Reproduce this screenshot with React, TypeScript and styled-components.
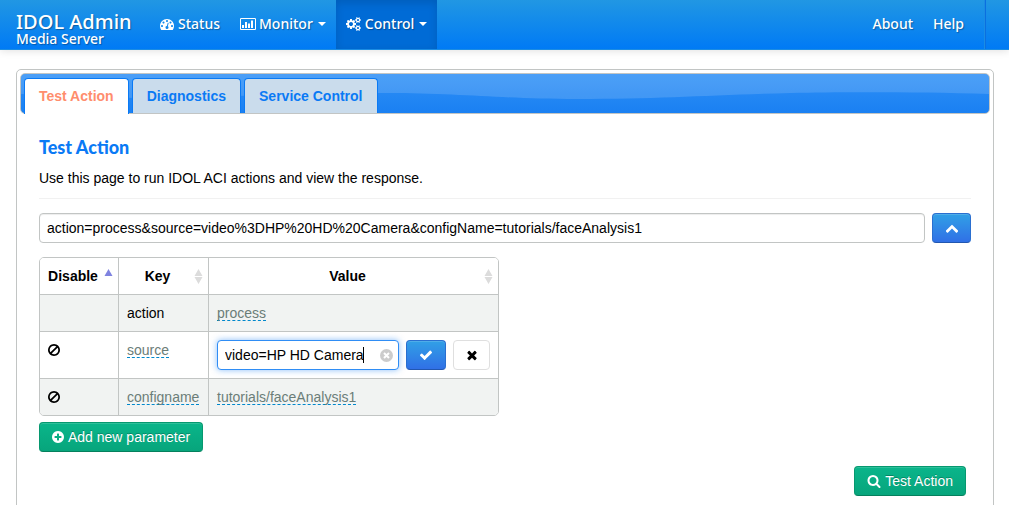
import React, { useState } from "react";
import styled, { createGlobalStyle, css } from "styled-components";

const Global = createGlobalStyle`
  *, *::before, *::after { box-sizing: border-box; }
  html { scrollbar-width: none; }
  body {
    margin: 0;
    background: #fff;
    color: #000;
    font: 14px/20px "Liberation Sans", Arial, sans-serif;
  }
  button, input { font: inherit; color: inherit; }
  h1, h2, p { margin: 0; }
`;

const barFont = css`
  font-family: "Noto Sans", "Open Sans", sans-serif;
`;

/* ---------- icons ---------- */

const small = (y: number) =>
  `M1920 ${y}v140q0 16-149 31-12 27-30 52 51 113 51 138 0 4-4 7-122 71-124 71-8 0-46-47t-52-68q-20 2-30 2t-30-2q-14 21-52 68t-46 47q-2 0-124-71-4-3-4-7 0-25 51-138-18-25-30-52-149-15-149-31v-140q0-16 149-31 13-29 30-52-51-113-51-138 0-4 4-7 4-2 35-20t59-34 30-16q8 0 46 46.5t52 67.5q20-2 30-2t30 2q51-71 92-112l6-2q4 0 124 70 4 3 4 7 0 25-51 138 17 23 30 52 149 15 149 31z`;

const paths = {
  dashboard:
    "M384 1152q0-53-37.5-90.5t-90.5-37.5-90.5 37.5-37.5 90.5 37.5 90.5 90.5 37.5 90.5-37.5 37.5-90.5zm192-448q0-53-37.5-90.5t-90.5-37.5-90.5 37.5-37.5 90.5 37.5 90.5 90.5 37.5 90.5-37.5 37.5-90.5zm428 481l101-382q6-26-7.5-48.5t-38.5-29.5-48 6.5-30 39.5l-101 382q-60 5-107 43.5t-63 98.5q-20 77 20 146t117 89 146-20 89-117q16-60-6-117t-72-91zm660-33q0-53-37.5-90.5t-90.5-37.5-90.5 37.5-37.5 90.5 37.5 90.5 90.5 37.5 90.5-37.5 37.5-90.5zm-640-640q0-53-37.5-90.5t-90.5-37.5-90.5 37.5-37.5 90.5 37.5 90.5 90.5 37.5 90.5-37.5 37.5-90.5zm448 192q0-53-37.5-90.5t-90.5-37.5-90.5 37.5-37.5 90.5 37.5 90.5 90.5 37.5 90.5-37.5 37.5-90.5zm320 448q0 261-141 483-19 29-54 29h-1402q-35 0-54-29-141-221-141-483 0-182 71-348t191-286 286-191 348-71 348 71 286 191 191 286 71 348z",
  chart:
    "M160 128h1728q66 0 113 47t47 113v1216q0 66-47 113t-113 47h-1728q-66 0-113-47t-47-113v-1216q0-66 47-113t113-47zm0 128q-32 0-32 32v1216q0 32 32 32h1728q32 0 32-32v-1216q0-32-32-32zM256 1024h256v384h-256zM640 640h256v768h-256zM1024 832h256v576h-256zM1408 448h256v960h-256z",
  cogs:
    "M896 896q0-106-75-181t-181-75-181 75-75 181 75 181 181 75 181-75 75-181zm768 512q0-52-38-90t-90-38-90 38-38 90q0 53 37.5 90.5t90.5 37.5 90.5-37.5 37.5-90.5zm0-1024q0-52-38-90t-90-38-90 38-38 90q0 53 37.5 90.5t90.5 37.5 90.5-37.5 37.5-90.5zm-384 421v185q0 10-7 19.5t-16 10.5l-155 24q-11 35-32 76 34 48 90 115 7 11 7 20 0 12-7 19-23 30-82.5 89.5t-78.5 59.5q-11 0-21-7l-115-90q-37 19-77 31-11 108-23 155-7 24-30 24h-186q-11 0-20-7.5t-10-17.5l-23-153q-34-10-75-31l-118 89q-7 7-20 7-11 0-21-8-144-133-144-160 0-9 7-19 10-14 41-53t47-61q-23-44-35-82l-152-24q-10-1-17-9.5t-7-19.5v-185q0-10 7-19.5t16-10.5l155-24q11-35 32-76-34-48-90-115-7-11-7-20 0-12 7-20 22-30 82-89t79-59q11 0 21 7l115 90q34-18 77-32 11-108 23-154 7-24 30-24h186q11 0 20 7.5t10 17.5l23 153q34 10 75 31l118-89q8-7 20-7 11 0 21 8 144 133 144 160 0 8-7 19-12 16-42 54t-45 60q23 48 34 82l152 23q10 2 17 10.5t7 19.5z" +
    small(1338) +
    small(314),
  ban: "M1440 893q0-161-87-295l-754 753q137 89 297 89 111 0 211.5-43.5t173.5-116.5 116-174.5 43-212.5zm-999 299l755-754q-135-91-300-91-148 0-273 73t-198 199-73 274q0 162 89 299zm1223-299q0 157-61 300t-163.5 246-245 164-298.5 61-298.5-61-245-164-163.5-246-61-300 61-299.5 163.5-245.5 245-164 298.5-61 298.5 61 245 164 163.5 245.5 61 299.5z",
  check:
    "M1671 566q0 40-28 68l-724 724-136 136q-28 28-68 28t-68-28l-136-136-362-362q-28-28-28-68t28-68l136-136q28-28 68-28t68 28l294 295 656-657q28-28 68-28t68 28l136 136q28 28 28 68z",
  close:
    "M1490 1322q0 40-28 68l-136 136q-28 28-68 28t-68-28l-294-294-294 294q-28 28-68 28t-68-28l-136-136q-28-28-28-68t28-68l294-294-294-294q-28-28-28-68t28-68l136-136q28-28 68-28t68 28l294 294 294-294q28-28 68-28t68 28l136 136q28 28 28 68t-28 68l-294 294 294 294q28 28 28 68z",
  plus: "M1344 960v-128q0-26-19-45t-45-19h-256v-256q0-26-19-45t-45-19h-128q-26 0-45 19t-19 45v256h-256q-26 0-45 19t-19 45v128q0 26 19 45t45 19h256v256q0 26 19 45t45 19h128q26 0 45-19t19-45v-256h256q26 0 45-19t19-45zm320-64q0 209-103 385.5t-279.5 279.5-385.5 103-385.5-103-279.5-279.5-103-385.5 103-385.5 279.5-279.5 385.5-103 385.5 103 279.5 279.5 103 385.5z",
  search:
    "M1216 832q0-185-131.5-316.5t-316.5-131.5-316.5 131.5-131.5 316.5 131.5 316.5 316.5 131.5 316.5-131.5 131.5-316.5zm512 832q0 52-38 90t-90 38q-54 0-90-38l-343-342q-179 124-399 124-143 0-273.5-55.5t-225-150-150-225-55.5-273.5 55.5-273.5 150-225 225-150 273.5-55.5 273.5 55.5 225 150 150 225 55.5 273.5q0 220-124 399l343 343q37 37 37 90z",
  up: "M1683 1331l-166 165q-19 19-45 19t-45-19l-531-531-531 531q-19 19-45 19t-45-19l-166-165q-19-19-19-45.5t19-45.5l742-741q19-19 45-19t45 19l742 741q19 19 19 45.5t-19 45.5z",
};

/* width in pixels and horizontal span of each shape's cell */
const cells = {
  normal: { width: 14, box: "0 0 1792 1792" },
  dial: { width: 16, box: "0 0 1792 1792" },
  wide: { width: 16, box: "0 0 2048 1792" },
  narrow: { width: 12, box: "128 0 1536 1792" },
};

const Svg = styled.svg`
  display: block;
  flex: none;
  fill: currentColor;
`;

function Icon({ name, cell = "normal" }: { name: keyof typeof paths; cell?: keyof typeof cells }) {
  return (
    <Svg width={cells[cell].width} height={14} viewBox={cells[cell].box} fillRule="evenodd" aria-hidden="true">
      <path d={paths[name]} />
    </Svg>
  );
}

/* ---------- top bar ---------- */

const TopBar = styled.header`
  ${barFont}
  display: flex;
  height: 50px;
  padding: 0 24px 0 16px;
  color: #fff;
  background: linear-gradient(#2197e3, #007af5);
  border-bottom: 1px solid #1b8ce3;
  box-shadow: 0 1px 8px rgba(0, 0, 0, 0.12);
  text-shadow: 1px 1px 1px rgba(0, 0, 0, 0.3);
`;

const Brand = styled.h1`
  width: 133px;
  padding-top: 12px;
  font-size: 20px;
  line-height: 20px;
  font-weight: 500;
  white-space: nowrap;
`;

const BrandSub = styled.span`
  display: block;
  font-size: 14px;
  line-height: 14px;
`;

const Nav = styled.nav<{ $end?: boolean }>`
  display: flex;
  ${(p) =>
    p.$end &&
    css`
      margin-left: auto;
      padding-right: 10px;
      border-right: 1px solid #1b8ce3;
      box-shadow: 1px 0 0 #0a6fe0;
    `}
`;

const NavLink = styled.a<{ $active?: boolean }>`
  display: flex;
  align-items: center;
  gap: 3px;
  padding: 0 10px 2px;
  font-size: 14px;
  font-weight: 500;
  color: #fff;
  text-decoration: none;
  ${(p) =>
    p.$active &&
    css`
      background: #006bd6;
      box-shadow: inset 0 3px 8px rgba(0, 0, 0, 0.13);
    `}
`;

const Caret = styled.span`
  margin-left: 2px;
  border: 4px solid transparent;
  border-top-color: #fff;
  border-bottom: 0;
`;

/* ---------- tabs ---------- */

const Box = styled.main`
  margin: 19px 15px 20px 16px;
  padding: 3px;
  border: 1px solid #c2c5c4;
  border-radius: 5px;
`;

const TabBar = styled.div`
  position: relative;
  display: flex;
  gap: 3px;
  height: 41px;
  padding: 4px 3px 0;
  border: 1px solid #c2c5c4;
  border-radius: 5px;
  background: linear-gradient(#2f90f6, #1a80f2);
`;

const Wave = styled.svg`
  position: absolute;
  inset: 0;
  width: 100%;
  height: 100%;
  border-radius: 4px;
`;

const Tab = styled.button<{ $active?: boolean }>`
  position: relative;
  height: 35px;
  padding: 0 14px;
  border: 1px solid #0a7af5;
  border-bottom: 0;
  border-radius: 4px 4px 0 0;
  background: #cadcec;
  color: #0a7af5;
  font-weight: 700;
  white-space: nowrap;
  ${(p) =>
    p.$active &&
    css`
      height: 36px;
      padding-bottom: 2px;
      background: #fff;
      color: #ff8d6d;
    `}
`;

/* ---------- panel ---------- */

const Panel = styled.section`
  padding: 23px 19px 19px;
`;

const Title = styled.h2`
  color: #0a7af5;
  font-family: Lato, "Open Sans", sans-serif;
  font-size: 18px;
  line-height: 20px;
  font-weight: 900;
`;

const Intro = styled.p`
  margin-top: 11px;
  padding-bottom: 10px;
  border-bottom: 1px solid #f1f1f1;
`;

const QueryRow = styled.div`
  display: flex;
  gap: 7px;
  margin-top: 14px;
`;

const TextInput = styled.input<{ $focus?: boolean }>`
  display: block;
  flex: 1;
  min-width: 0;
  width: 100%;
  height: 30px;
  padding: 0 7px;
  border: 1px solid #c2c5c4;
  border-radius: 4px;
  background: #fff;
  outline: 0;
  box-shadow: inset 0 1px 1px rgba(0, 0, 0, 0.075);
  ${(p) =>
    p.$focus &&
    css`
      border-color: #2f8df5;
      box-shadow: 0 0 6px rgba(20, 125, 245, 0.5);
    `}
`;

const tones = {
  blue: css`
    color: #fff;
    border-color: #2a6fd0 #2a6fd0 #2257b0;
    background: linear-gradient(#31a0e6, #3070e6);
  `,
  green: css`
    color: #fff;
    border-color: #06986f #06986f #05805d;
    background: linear-gradient(#0ab58a, #07a57c);
  `,
  plain: css`
    color: #000;
    border-color: #dfdfdf;
    background: #fff;
  `,
};

const Button = styled.button<{ $tone: keyof typeof tones; $width?: number }>`
  display: flex;
  align-items: center;
  justify-content: center;
  gap: 4px;
  flex: none;
  height: 30px;
  width: ${(p) => (p.$width ? `${p.$width}px` : "auto")};
  padding: 0 12px;
  border: 1px solid;
  border-radius: 4px;
  white-space: nowrap;
  ${(p) => tones[p.$tone]}
  ${(p) =>
    p.$tone !== "plain" &&
    css`
      box-shadow: inset 0 1px 0 rgba(255, 255, 255, 0.15);
      text-shadow: 0 -1px 0 rgba(0, 0, 0, 0.25);
    `}
`;

const Table = styled.table`
  width: 460px;
  margin: 14px 0 6px;
  table-layout: fixed;
  border: 1px solid #c2c5c4;
  border-radius: 5px;
  border-spacing: 0;
  overflow: hidden;
`;

const Row = styled.tr<{ $shade?: boolean }>`
  background: ${(p) => (p.$shade ? "#f1f3f2" : "#fff")};
`;

const Head = styled.th<{ $width?: number }>`
  position: relative;
  width: ${(p) => (p.$width ? `${p.$width}px` : "auto")};
  height: 36px;
  padding: 8px 20px 8px 8px;
  text-align: center;
  & + & {
    border-left: 1px solid #c2c5c4;
  }
`;

const Cell = styled.td`
  padding: 8px;
  border-top: 1px solid #c2c5c4;
  vertical-align: top;
  & + & {
    border-left: 1px solid #c2c5c4;
  }
`;

const SortMark = styled.svg`
  position: absolute;
  top: 11px;
  right: 5px;
  width: 9px;
  height: 15px;
`;

const EditLink = styled.a`
  display: inline-block;
  height: 18px;
  line-height: 20px;
  color: #6b7d78;
  text-decoration: none;
  border-bottom: 1px dashed #0088cc;
`;

const IconButton = styled.button`
  display: block;
  margin: 3px 0;
  padding: 0;
  border: 0;
  background: none;
`;

const EditRow = styled.form`
  display: flex;
  gap: 7px;
`;

const Field = styled.div`
  position: relative;
  width: 182px;
`;

const ValueInput = styled(TextInput)`
  caret-color: transparent;
`;

const TextCursor = styled.span`
  position: absolute;
  top: 7px;
  left: 146px;
  width: 1px;
  height: 16px;
  background: #000;
`;

const Clear = styled.button`
  position: absolute;
  top: 9px;
  right: 6px;
  padding: 0;
  border: 0;
  background: none;
`;

const ClearMark = styled.svg`
  display: block;
`;

const Footer = styled.div`
  display: flex;
  justify-content: flex-end;
  padding: 14px 5px 0;
`;

const tabs = ["Test Action", "Diagnostics", "Service Control"];

function Sort({ active }: { active?: boolean }) {
  return (
    <SortMark viewBox="0 0 9 15" aria-hidden="true">
      {active ? (
        <path d="M4.5 0L8.5 7h-8z" fill="#7f83e0" />
      ) : (
        <path d="M4.5 0L8.5 7h-8zM.5 8h8l-4 7z" fill="#dcdcdc" />
      )}
    </SortMark>
  );
}

export default function App() {
  const [tab, setTab] = useState(0);
  const [query, setQuery] = useState(
    "action=process&source=video%3DHP%20HD%20Camera&configName=tutorials/faceAnalysis1"
  );
  const [value, setValue] = useState("video=HP HD Camera");

  return (
    <>
      <Global />
      <TopBar>
        <Brand>
          IDOL Admin
          <BrandSub>Media Server</BrandSub>
        </Brand>
        <Nav aria-label="Main">
          <NavLink href="#status">
            <Icon name="dashboard" cell="dial" />
            Status
          </NavLink>
          <NavLink href="#monitor">
            <Icon name="chart" cell="wide" />
            Monitor
            <Caret />
          </NavLink>
          <NavLink href="#control" $active>
            <Icon name="cogs" cell="wide" />
            Control
            <Caret />
          </NavLink>
        </Nav>
        <Nav $end aria-label="Support">
          <NavLink href="#about">About</NavLink>
          <NavLink href="#help">Help</NavLink>
        </Nav>
      </TopBar>
      <Box>
        <TabBar role="tablist">
          <Wave viewBox="0 0 968 39" preserveAspectRatio="none" aria-hidden="true">
            <path
              d="M0 0H968V20C900 18 820 18 770 19C690 21 640 25 556 25C480 25 440 19 365 19C250 18 200 25 120 24C70 24 30 21 0 20Z"
              fill="#fff"
              fillOpacity="0.14"
            />
          </Wave>
          {tabs.map((name, i) => (
            <Tab key={name} role="tab" aria-selected={i === tab} $active={i === tab} onClick={() => setTab(i)}>
              {name}
            </Tab>
          ))}
        </TabBar>
        <Panel>
          <Title>Test Action</Title>
          <Intro>Use this page to run IDOL ACI actions and view the response.</Intro>
          <QueryRow>
            <TextInput aria-label="Action" value={query} onChange={(e) => setQuery(e.target.value)} />
            <Button $tone="blue" $width={39} aria-label="Hide parameters">
              <Icon name="up" cell="narrow" />
            </Button>
          </QueryRow>
          <Table>
            <thead>
              <Row>
                <Head $width={78}>
                  Disable
                  <Sort active />
                </Head>
                <Head $width={90}>
                  Key
                  <Sort />
                </Head>
                <Head>
                  Value
                  <Sort />
                </Head>
              </Row>
            </thead>
            <tbody>
              <Row $shade>
                <Cell />
                <Cell>action</Cell>
                <Cell>
                  <EditLink href="#process">process</EditLink>
                </Cell>
              </Row>
              <Row>
                <Cell>
                  <IconButton aria-label="Disable source">
                    <Icon name="ban" cell="narrow" />
                  </IconButton>
                </Cell>
                <Cell>
                  <EditLink href="#source">source</EditLink>
                </Cell>
                <Cell>
                  <EditRow onSubmit={(e) => e.preventDefault()}>
                    <Field>
                      <ValueInput
                        $focus
                        aria-label="Value of source"
                        value={value}
                        onChange={(e) => setValue(e.target.value)}
                      />
                      <TextCursor />
                      <Clear type="button" aria-label="Clear" onClick={() => setValue("")}>
                        <ClearMark width="13" height="13" viewBox="0 0 13 13" aria-hidden="true">
                          <circle cx="6.5" cy="6.5" r="6.5" fill="#ccc" />
                          <path d="M4 4l5 5M9 4l-5 5" stroke="#fff" strokeWidth="2" />
                        </ClearMark>
                      </Clear>
                    </Field>
                    <Button $tone="blue" $width={40} aria-label="Save">
                      <Icon name="check" />
                    </Button>
                    <Button $tone="plain" $width={37} type="button" aria-label="Cancel">
                      <Icon name="close" />
                    </Button>
                  </EditRow>
                </Cell>
              </Row>
              <Row $shade>
                <Cell>
                  <IconButton aria-label="Disable configname">
                    <Icon name="ban" cell="narrow" />
                  </IconButton>
                </Cell>
                <Cell>
                  <EditLink href="#configname">configname</EditLink>
                </Cell>
                <Cell>
                  <EditLink href="#value">tutorials/faceAnalysis1</EditLink>
                </Cell>
              </Row>
            </tbody>
          </Table>
          <Button $tone="green">
            <Icon name="plus" cell="narrow" />
            Add new parameter
          </Button>
          <Footer>
            <Button $tone="green">
              <Icon name="search" />
              Test Action
            </Button>
          </Footer>
        </Panel>
      </Box>
    </>
  );
}
